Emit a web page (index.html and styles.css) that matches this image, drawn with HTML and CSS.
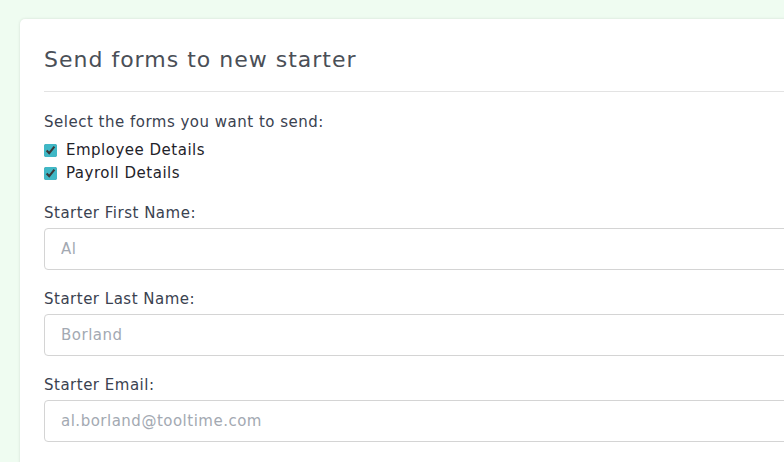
FILE: index.html
```html
<!DOCTYPE html>
<html lang="en">
<head>
<meta charset="utf-8">
<title>Send forms to new starter</title>
<link rel="stylesheet" href="styles.css">
</head>
<body>
<main class="page">
  <section class="card">
    <h1 class="card-title">Send forms to new starter</h1>
    <form class="form">
      <p class="intro">Select the forms you want to send:</p>
      <label class="check"><input type="checkbox" checked> <span>Employee Details</span></label>
      <label class="check"><input type="checkbox" checked> <span>Payroll Details</span></label>

      <div class="field">
        <label class="field-label" for="fn">Starter First Name:</label>
        <input class="input" id="fn" type="text" placeholder="Al">
      </div>
      <div class="field">
        <label class="field-label" for="ln">Starter Last Name:</label>
        <input class="input" id="ln" type="text" placeholder="Borland">
      </div>
      <div class="field">
        <label class="field-label" for="em">Starter Email:</label>
        <input class="input" id="em" type="email" placeholder="al.borland@tooltime.com">
      </div>
    </form>
  </section>
</main>
</body>
</html>
```

FILE: styles.css
```css
* { box-sizing: border-box; }
html, body { margin: 0; padding: 0; }
body {
  background: #effcf1;
  font-family: "DejaVu Sans", "Open Sans", sans-serif;
  color: #3a4250;
  overflow: hidden;
  width: 784px;
  height: 462px;
}
.page {
  padding: 19px 0 0 20px;
}
.card {
  background: #fff;
  border-radius: 5px 0 0 0;
  box-shadow: 0 0 3px rgba(0,0,0,0.12);
  padding: 23px 0 30px 24px;
  width: 800px;
}
.card-title {
  margin: 0;
  font-size: 22px;
  font-weight: 400;
  letter-spacing: 1px;
  color: #4a4f57;
  line-height: 36px;
  padding-bottom: 13px;
  border-bottom: 1px solid #e3e3e3;
}
.form {
  padding-top: 18px;
}
.intro {
  margin: 0 0 5px;
  font-size: 15px;
  letter-spacing: 0.5px;
  line-height: 24px;
  color: #3a4250;
}
.check {
  display: flex;
  align-items: center;
  gap: 9px;
  font-size: 15px;
  letter-spacing: 0.5px;
  line-height: 23px;
  color: #1f232a;
}
.check input {
  margin: 0;
  width: 13px;
  height: 13px;
  accent-color: #40b8c6;
}
.field {
  display: flex;
  flex-direction: column;
  margin-top: 18px;
}
.field:first-of-type { margin-top: 17px; }
.field-label {
  font-size: 15px;
  letter-spacing: 0.5px;
  line-height: 22px;
  color: #3a4250;
  margin-bottom: 4px;
}
.input {
  height: 42px;
  border: 1px solid #d4d4d4;
  border-radius: 4px 0 0 4px;
  padding: 0 16px;
  font-family: inherit;
  font-size: 15px;
  letter-spacing: 0.5px;
  color: #333;
  width: 760px;
}
.input::placeholder { color: #a3a9b2; }
```
